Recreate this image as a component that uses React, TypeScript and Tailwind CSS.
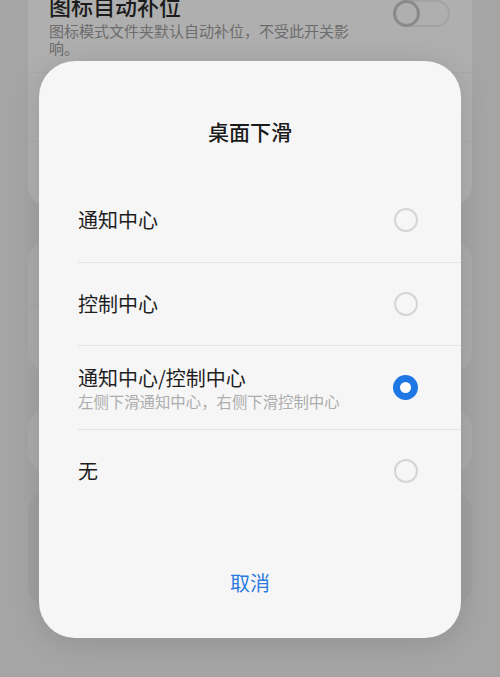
import React, { useState } from "react"

const options = [
  { id: "notify", title: "通知中心" },
  { id: "control", title: "控制中心" },
  { id: "both", title: "通知中心/控制中心", desc: "左侧下滑通知中心，右侧下滑控制中心" },
  { id: "none", title: "无" },
]

function Radio({ checked }: { checked: boolean }) {
  return checked ? (
    <div className="w-[25px] h-[25px] rounded-full border-[7px] border-[#1f77e6] bg-white shrink-0" />
  ) : (
    <div className="w-[24px] h-[24px] rounded-full border-2 border-[#d5d5d5] shrink-0" />
  )
}

export default function App() {
  const [selected, setSelected] = useState("both")

  return (
    <div
      className="relative w-[500px] h-[677px] overflow-hidden bg-[#a5a5a6]"
      style={{ fontFamily: '"Noto Sans CJK SC", "Noto Sans", sans-serif' }}
    >
      {/* dimmed settings page behind the sheet */}
      <div className="px-7 flex flex-col">
        <div className="-mt-[20px] h-[227px] bg-[#afafaf] rounded-b-[22px] flex flex-col">
          <div className="h-[93px] flex items-start justify-between pl-[21px] pr-[22px] pt-[11px] border-b border-[#a9a9a9]">
            <div>
              <div className="text-[22px] leading-[28px] font-medium text-[#1c1c1c]">图标自动补位</div>
              <div className="mt-[3px] w-[310px] text-[15px] leading-[17px] text-[#6c6c6c]">
                图标模式文件夹默认自动补位，不受此开关影响。
              </div>
            </div>
            <div className="mt-[9px] w-[57px] h-[27px] rounded-full border-2 border-[#a3a3a3] flex items-center">
              <div className="w-[27px] h-[27px] -ml-[2px] rounded-full border-[3px] border-[#8a8a8a]" />
            </div>
          </div>
          <div className="h-[69px] border-b border-[#a9a9a9]" />
        </div>
        <div className="mt-[33px] h-[133px] bg-[#ababab] rounded-[22px] flex flex-col">
          <div className="h-[65px] border-b border-[#a7a7a7]" />
        </div>
        <div className="mt-[35px] h-[65px] bg-[#ababab] rounded-[22px]" />
        <div className="mt-[17px] h-[117px] bg-[#a0a0a1] rounded-[22px]" />
      </div>

      {/* bottom sheet dialog */}
      <div className="absolute left-[39px] top-[61px] w-[422px] h-[577px] rounded-[36px] bg-[#f6f6f6] shadow-[0_4px_30px_rgba(0,0,0,0.12)] flex flex-col">
        <div className="pt-[55px] text-center text-[21px] leading-[30px] font-medium text-[#1b1b1b]">
          桌面下滑
        </div>

        <div className="mt-[33px] flex flex-col">
          {options.map((opt, i) => (
            <button
              key={opt.id}
              onClick={() => setSelected(opt.id)}
              className={`h-[83.5px] ml-[39px] pr-[43px] flex items-center justify-between text-left ${
                i < options.length - 1 ? "border-b border-[#e4e4e4]" : ""
              }`}
            >
              <div className="flex flex-col">
                <span className="text-[20px] leading-[28px] text-[#1e1e1e]">{opt.title}</span>
                {opt.desc && (
                  <span className="text-[15.4px] leading-[20px] text-[#adadad] -mt-[1px]">{opt.desc}</span>
                )}
              </div>
              <Radio checked={selected === opt.id} />
            </button>
          ))}
        </div>

        <button className="mt-[55px] text-center text-[20px] leading-[30px] text-[#2b7be0]">取消</button>
      </div>
    </div>
  )
}
